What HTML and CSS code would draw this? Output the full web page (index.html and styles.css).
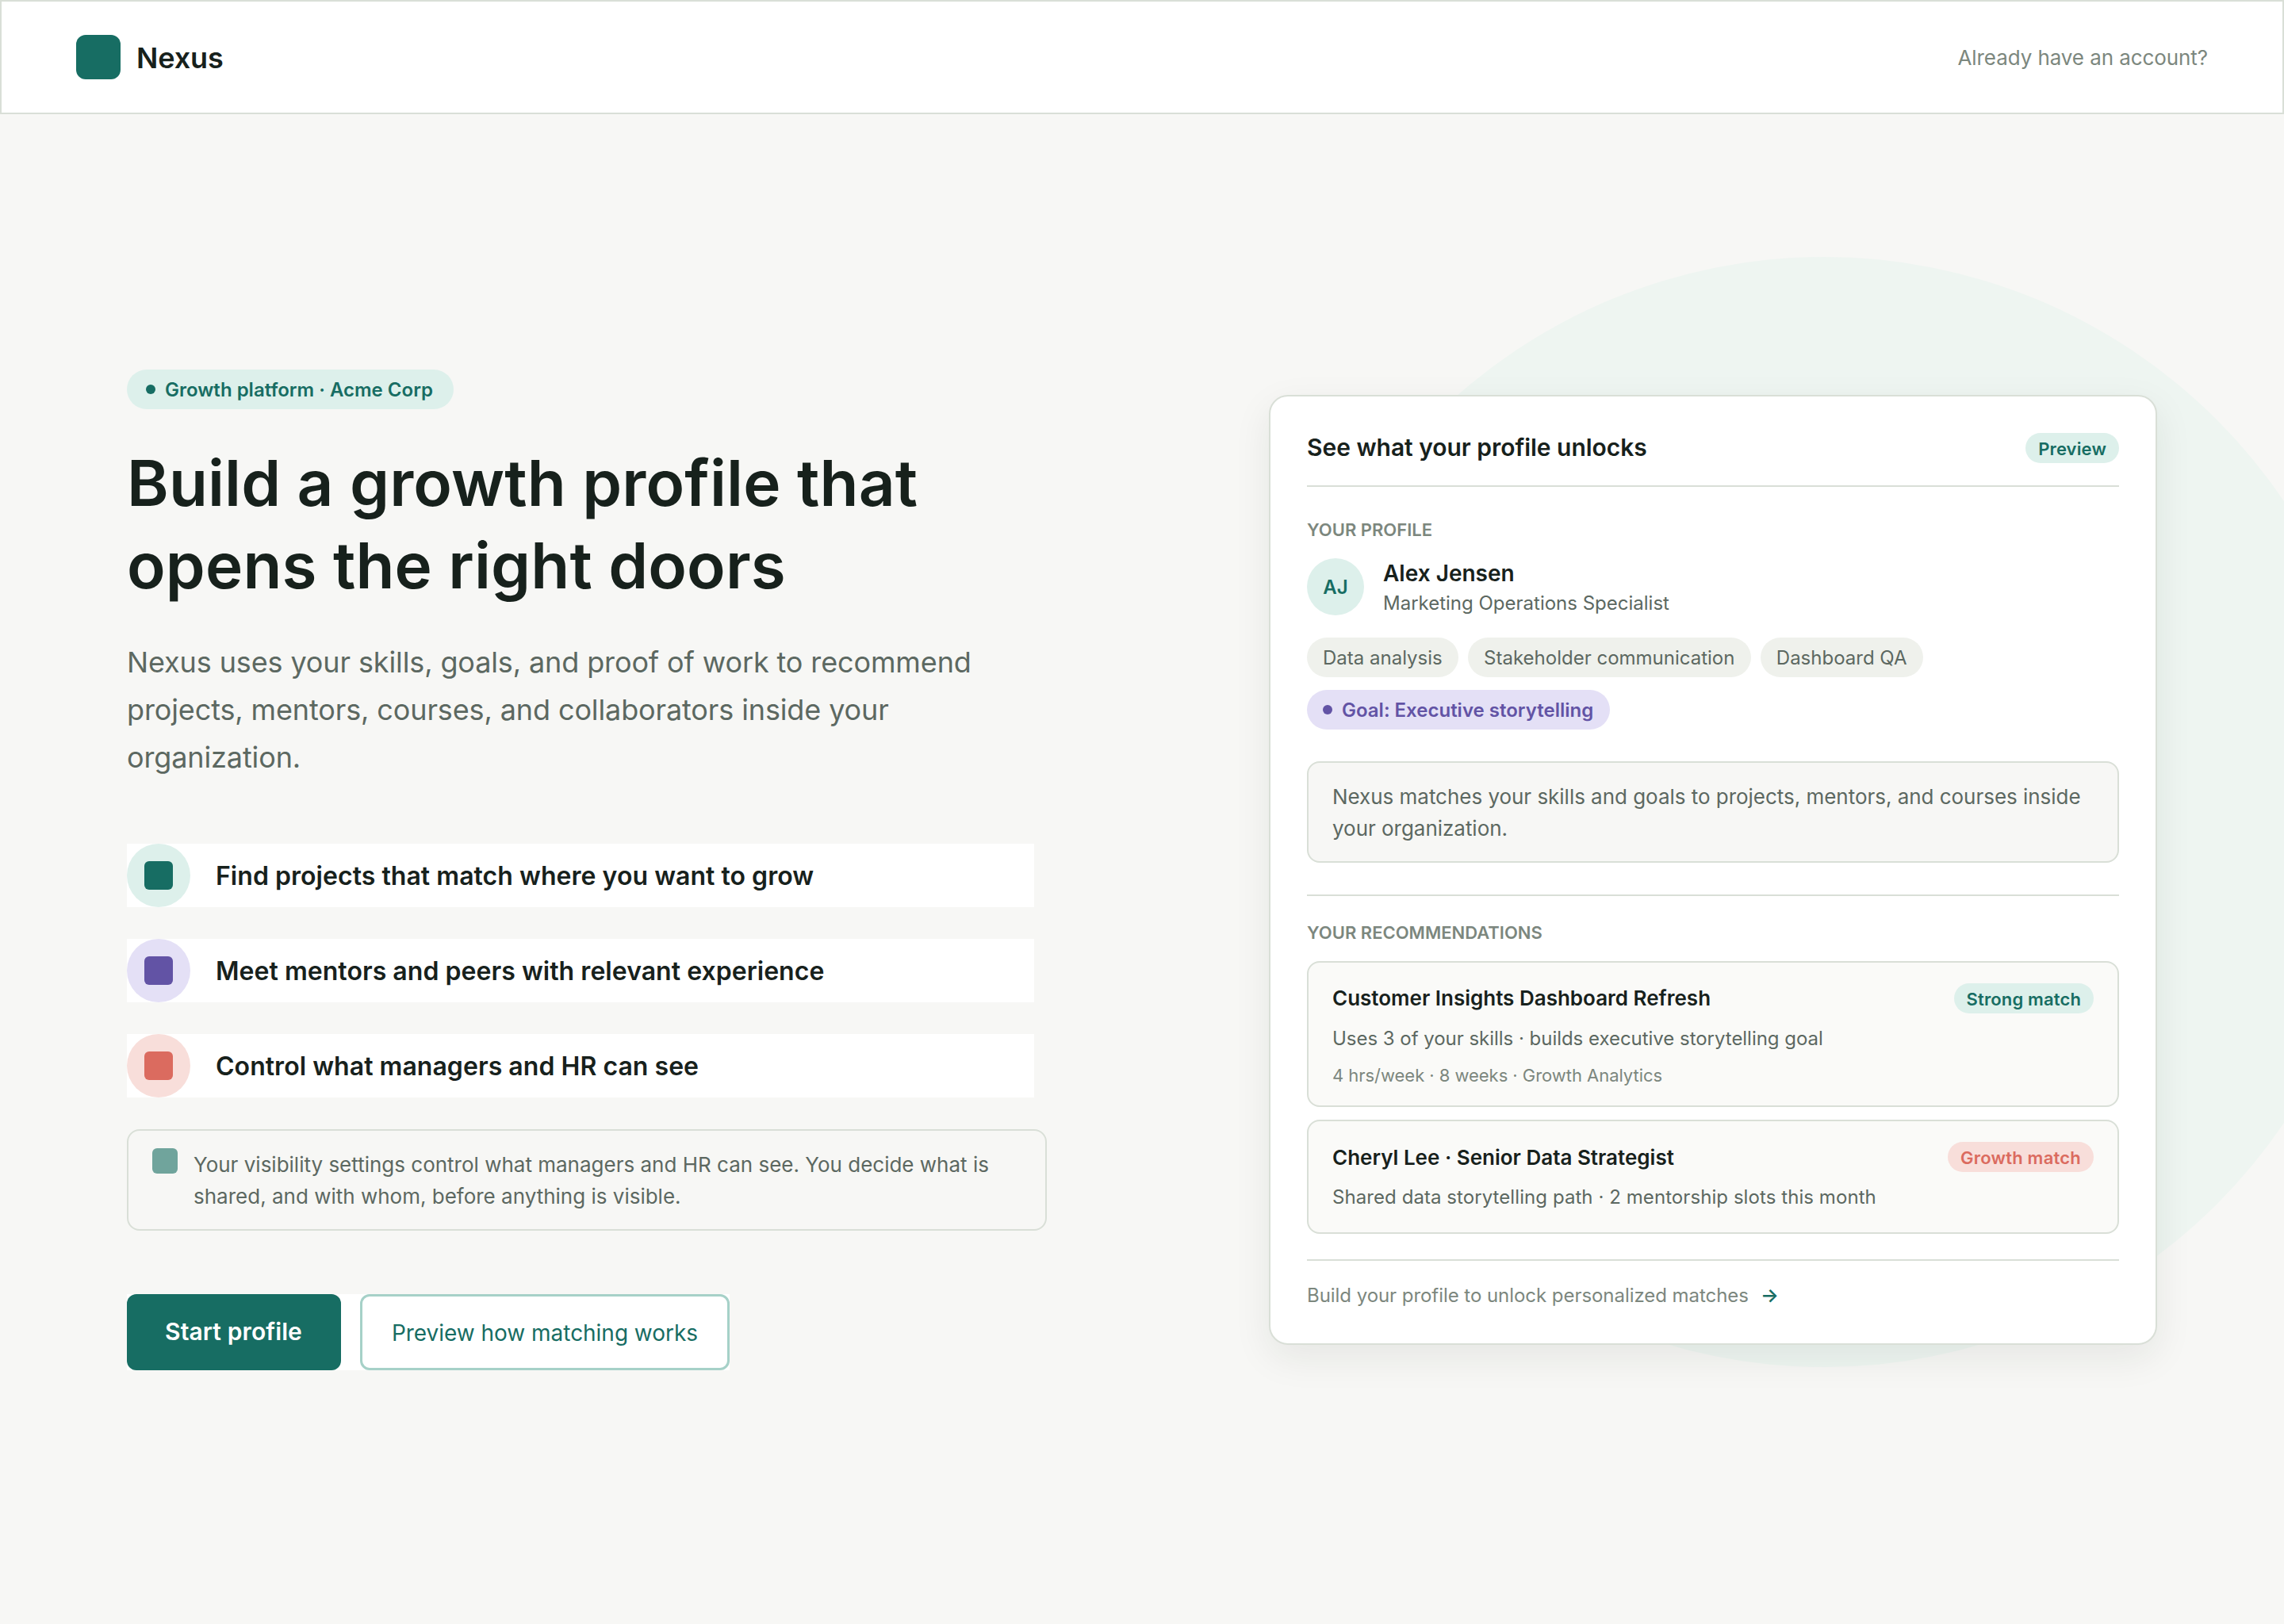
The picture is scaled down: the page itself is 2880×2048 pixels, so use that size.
FILE: index.html
```html
<!DOCTYPE html>
<html lang="en">
<head>
<meta charset="utf-8">
<title>Nexus</title>
<link rel="stylesheet" href="styles.css">
</head>
<body>
<header class="topbar">
  <div class="brand"><span class="brand-mark"></span><span class="brand-name">Nexus</span></div>
  <a class="signin">Already have an account?</a>
</header>
<main class="hero">
  <div class="halo"></div>
  <section class="intro">
    <div class="eyebrow"><span class="dot"></span>Growth platform · Acme Corp</div>
    <h1 class="headline">Build a growth profile that<br>opens the right doors</h1>
    <p class="lead">Nexus uses your skills, goals, and proof of work to recommend<br>projects, mentors, courses, and collaborators inside your<br>organization.</p>
    <ul class="features">
      <li class="feature green"><span class="feature-icon"><i></i></span>Find projects that match where you want to grow</li>
      <li class="feature purple"><span class="feature-icon"><i></i></span>Meet mentors and peers with relevant experience</li>
      <li class="feature coral"><span class="feature-icon"><i></i></span>Control what managers and HR can see</li>
    </ul>
    <div class="note"><span class="note-icon"></span><p>Your visibility settings control what managers and HR can see. You decide what is<br>shared, and with whom, before anything is visible.</p></div>
    <div class="actions">
      <button class="btn primary">Start profile</button>
      <button class="btn secondary">Preview how matching works</button>
    </div>
  </section>
  <section class="card">
    <div class="card-head"><h2>See what your profile unlocks</h2><span class="badge">Preview</span></div>
    <h3 class="label">YOUR PROFILE</h3>
    <div class="person">
      <span class="avatar">AJ</span>
      <div><div class="person-name">Alex Jensen</div><div class="person-role">Marketing Operations Specialist</div></div>
    </div>
    <div class="chips">
      <span class="chip">Data analysis</span><span class="chip">Stakeholder communication</span><span class="chip">Dashboard QA</span>
    </div>
    <div class="chips goals"><span class="chip goal"><span class="dot"></span>Goal: Executive storytelling</span></div>
    <p class="explain">Nexus matches your skills and goals to projects, mentors, and courses inside<br>your organization.</p>
    <div class="recs">
      <h3 class="label">YOUR RECOMMENDATIONS</h3>
      <article class="rec">
        <div class="rec-head"><h4>Customer Insights Dashboard Refresh</h4><span class="badge">Strong match</span></div>
        <p class="rec-text">Uses 3 of your skills · builds executive storytelling goal</p>
        <p class="rec-meta">4 hrs/week · 8 weeks · Growth Analytics</p>
      </article>
      <article class="rec mentor">
        <div class="rec-head"><h4>Cheryl Lee · Senior Data Strategist</h4><span class="badge growth">Growth match</span></div>
        <p class="rec-text">Shared data storytelling path · 2 mentorship slots this month</p>
      </article>
    </div>
    <div class="card-foot">Build your profile to unlock personalized matches<span class="arrow">→</span></div>
  </section>
</main>
</body>
</html>
```
FILE: styles.css
```css
:root {
  --ink: #17211c;
  --body: #5c6861;
  --muted: #7c877e;
  --line: #d9dfd7;
  --green: #176d63;
  --mint: #ddf0eb;
  --purple: #6253a5;
  --lilac: #e4e0f6;
  --coral: #db6b5f;
  --blush: #f8deda;
  --page: #f7f7f5;
}

* { box-sizing: border-box; margin: 0; padding: 0; }

body {
  width: 2880px;
  height: 2048px;
  display: flex;
  flex-direction: column;
  background: var(--page);
  color: var(--ink);
  font-family: Inter, sans-serif;
  overflow: hidden;
}

h1, h2, h3, h4 { font-weight: 600; }

.topbar {
  height: 144px;
  flex: none;
  display: flex;
  align-items: center;
  justify-content: space-between;
  padding: 0 94px;
  background: #fff;
  border: 2px solid var(--line);
}
.brand { display: flex; align-items: center; gap: 20px; }
.brand-mark { width: 56px; height: 56px; border-radius: 12px; background: var(--green); }
.brand-name { padding-top: 2px; font-size: 36px; line-height: 44px; font-weight: 600; letter-spacing: -0.1px; }
.signin { padding-top: 2px; font-size: 26px; line-height: 32px; letter-spacing: -0.08px; color: var(--muted); }

.hero {
  position: relative;
  flex: 1;
  display: flex;
  justify-content: space-between;
  align-items: flex-start;
  padding: 0 160px;
}
.halo {
  position: absolute;
  left: 1600px;
  top: 180px;
  width: 1400px;
  height: 1400px;
  border-radius: 50%;
  background: #eef5f1;
}

.intro { width: 1160px; padding-top: 322px; }
.dot { width: 12px; height: 12px; border-radius: 50%; background: currentColor; flex: none; }
.eyebrow {
  display: inline-flex;
  align-items: center;
  gap: 12px;
  width: 412px;
  height: 50px;
  padding: 0 24px;
  border-radius: 25px;
  background: var(--mint);
  color: var(--green);
  font-size: 24px;
  font-weight: 600;
  white-space: nowrap;
  vertical-align: top;
}
.headline { margin-top: 41px; font-size: 80px; line-height: 104px; letter-spacing: 0.15px; }
.lead { margin-top: 40px; font-size: 36px; line-height: 60px; letter-spacing: -0.12px; color: var(--body); }
.features { margin-top: 79px; width: 1144px; display: grid; gap: 40px; list-style: none; }
.feature {
  display: flex;
  align-items: center;
  gap: 32px;
  height: 80px;
  background: #fff;
  font-size: 32px;
  font-weight: 600;
  letter-spacing: 0.04px;
}
.feature-icon { width: 80px; height: 80px; border-radius: 50%; display: grid; place-items: center; }
.feature-icon i { width: 36px; height: 36px; border-radius: 6px; }
.green .feature-icon { background: var(--mint); }
.green i { background: var(--green); }
.purple .feature-icon { background: var(--lilac); }
.purple i { background: var(--purple); }
.coral .feature-icon { background: var(--blush); }
.coral i { background: var(--coral); }

.note {
  margin-top: 40px;
  display: flex;
  gap: 20px;
  padding: 23px 30px 21px;
  border: 2px solid var(--line);
  border-radius: 16px;
  font-size: 26px;
  line-height: 40px;
  color: var(--body);
}
.note-icon { width: 32px; height: 32px; margin-top: -1px; border-radius: 6px; background: #70a49c; flex: none; }
.actions { margin-top: 80px; width: 760px; display: flex; gap: 24px; background: #fff; }
.btn { height: 96px; border-radius: 12px; font-family: inherit; white-space: nowrap; }
.primary { width: 270px; border: 0; background: var(--green); color: #fff; font-size: 30px; font-weight: 600; letter-spacing: 0.1px; padding: 0 1px 2px 0; }
.secondary { flex: 1; border: 3px solid #a6d1c8; background: #fff; color: var(--green); font-size: 28px; letter-spacing: -0.03px; padding-top: 2px; }

.card {
  position: relative;
  width: 1120px;
  height: 1198px;
  margin-top: 354px;
  padding: 46px;
  background: #fff;
  border: 2px solid var(--line);
  border-radius: 24px;
  box-shadow: 0 16px 48px rgba(23, 33, 28, 0.08);
}
.card-head {
  display: flex;
  align-items: center;
  justify-content: space-between;
  height: 68px;
  padding-bottom: 28px;
  border-bottom: 2px solid var(--line);
}
.card-head h2 { padding-bottom: 2px; font-size: 30px; line-height: 36px; letter-spacing: -0.03px; }
.badge {
  height: 38px;
  padding: 0 16px;
  border-radius: 19px;
  background: var(--mint);
  color: var(--green);
  font-size: 22px;
  line-height: 40px;
  font-weight: 600;
  letter-spacing: 0.14px;
}
.badge.growth { background: var(--blush); color: var(--coral); letter-spacing: 0.22px; }
.label { font-size: 22px; line-height: 28px; color: var(--muted); }
.card-head + .label { margin-top: 40px; }
.person { margin-top: 22px; display: flex; gap: 24px; height: 72px; }
.avatar {
  width: 72px;
  height: 72px;
  border-radius: 50%;
  background: var(--mint);
  color: var(--green);
  font-size: 24px;
  line-height: 73px;
  font-weight: 600;
  text-align: center;
}
.person-name { font-size: 28px; line-height: 38px; font-weight: 600; }
.person-role { font-size: 24px; line-height: 38px; color: var(--body); }
.chips { margin-top: 28px; display: flex; gap: 12px; }
.chips.goals { margin-top: 16px; }
.chip {
  display: flex;
  align-items: center;
  gap: 12px;
  height: 50px;
  padding: 0 20.4px 0 20px;
  border-radius: 25px;
  background: #eff1ec;
  color: var(--body);
  font-size: 24px;
}
.chip.goal { background: var(--lilac); color: var(--purple); font-weight: 600; padding-right: 21px; }
.explain {
  margin-top: 40px;
  padding: 23px 30px 21px;
  border: 2px solid var(--line);
  border-radius: 16px;
  background: var(--page);
  color: var(--body);
  font-size: 26px;
  line-height: 40px;
  letter-spacing: -0.03px;
}
.recs { margin-top: 40px; padding-top: 32px; border-top: 2px solid var(--line); display: grid; gap: 16px; }
.recs .label { margin-bottom: 6px; }
.rec {
  padding: 26px 30px 23px;
  border: 2px solid var(--line);
  border-radius: 16px;
  background: #fafaf8;
}
.rec-head { display: flex; align-items: center; justify-content: space-between; height: 38px; }
.rec-head h4 { font-size: 26px; line-height: 38px; }
.rec-text { margin-top: 16px; font-size: 24px; line-height: 32px; letter-spacing: -0.03px; color: var(--body); }
.rec-meta { margin-top: 15px; font-size: 22px; line-height: 30px; letter-spacing: -0.04px; color: var(--muted); }
.mentor { padding-bottom: 28px; }
.mentor h4 { padding-top: 2px; }
.mentor .rec-text { letter-spacing: 0.07px; }
.card-foot {
  margin-top: 32px;
  padding-top: 26px;
  border-top: 2px solid var(--line);
  display: flex;
  gap: 15px;
  font-size: 24px;
  line-height: 36px;
  letter-spacing: -0.05px;
  color: var(--muted);
}
.arrow { color: var(--green); font-weight: 600; }
```
